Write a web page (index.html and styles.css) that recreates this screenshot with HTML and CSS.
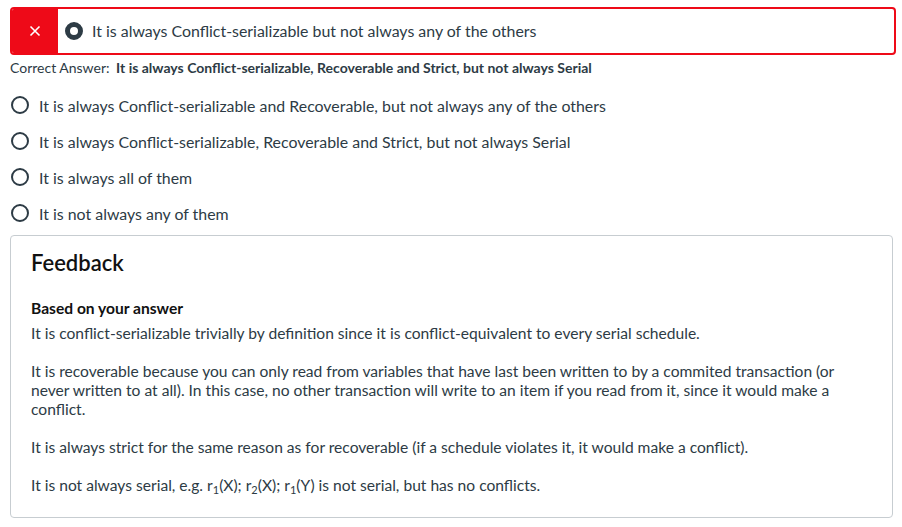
FILE: index.html
```html
<!DOCTYPE html>
<html>
<head>
<meta charset="utf-8">
<link rel="stylesheet" href="styles.css">
</head>
<body>
<div class="page">
  <div class="chosen">
    <div class="chosen-mark">
      <svg width="12" height="12" viewBox="0 0 12 12"><path d="M1.5 1.5 L10.5 10.5 M10.5 1.5 L1.5 10.5" stroke="#fff" stroke-width="1.6" fill="none"/></svg>
    </div>
    <div class="chosen-body">
      <span class="radio radio-on"></span>
      <span class="opt-text">It is always Conflict-serializable but not always any of the others</span>
    </div>
  </div>
  <div class="correct">Correct Answer: <b>It is always Conflict-serializable, Recoverable and Strict, but not always Serial</b></div>
  <ul class="options">
    <li class="option"><span class="radio"></span><span class="opt-text">It is always Conflict-serializable and Recoverable, but not always any of the others</span></li>
    <li class="option"><span class="radio"></span><span class="opt-text">It is always Conflict-serializable, Recoverable and Strict, but not always Serial</span></li>
    <li class="option"><span class="radio"></span><span class="opt-text">It is always all of them</span></li>
    <li class="option"><span class="radio"></span><span class="opt-text">It is not always any of them</span></li>
  </ul>
  <div class="feedback">
    <h2 class="fb-title">Feedback</h2>
    <h3 class="fb-sub">Based on your answer</h3>
    <p class="fb-p">It is conflict-serializable trivially by definition since it is conflict-equivalent to every serial schedule.</p>
    <p class="fb-p">It is recoverable because you can only read from variables that have last been written to by a commited transaction (or never written to at all). In this case, no other transaction will write to an item if you read from it, since it would make a conflict.</p>
    <p class="fb-p">It is always strict for the same reason as for recoverable (if a schedule violates it, it would make a conflict).</p>
    <p class="fb-p">It is not always serial, e.g. r<sub>1</sub>(X); r<sub>2</sub>(X); r<sub>1</sub>(Y) is not serial, but has no conflicts.</p>
  </div>
</div>
</body>
</html>
```
FILE: styles.css
```css
* { box-sizing: border-box; }
html, body { margin: 0; padding: 0; background: #fff; }
body {
  font-family: Lato, "Open Sans", sans-serif;
  color: #2d3b45;
}
.page {
  padding: 7px 6px 0 10px;
}
.chosen {
  display: flex;
  height: 48px;
  border: 2px solid #ee0a18;
  border-radius: 4px;
  overflow: hidden;
}
.chosen-mark {
  width: 46px;
  background: #ee0a18;
  display: flex;
  align-items: center;
  justify-content: center;
}
.chosen-body {
  display: flex;
  align-items: center;
  padding-left: 7px;
  gap: 9px;
}
.chosen-body .opt-text { padding-bottom: 2px; }
.radio {
  display: inline-block;
  width: 18px;
  height: 18px;
  border: 2px solid #2d3b45;
  border-radius: 50%;
  flex: none;
}
.radio-on {
  border-width: 5px;
}
.opt-text {
  font-size: 15.9px;
}
.correct {
  font-size: 14px;
  margin-top: 4px;
  line-height: 18px;
}
.correct b { margin-left: 3px; }
.options {
  list-style: none;
  margin: 10px 0 0;
  padding: 0;
}
.option {
  display: flex;
  align-items: center;
  gap: 10px;
  height: 36px;
  padding-left: 1px;
}
.feedback {
  margin-top: 4px;
  width: 883px;
  height: 283px;
  border: 1px solid #c7cdd1;
  border-radius: 4px;
  padding: 12px 20px 0 20px;
}
.fb-title {
  font-size: 22px;
  font-weight: 600;
  color: #111;
  margin: 0;
  line-height: 30px;
}
.fb-sub {
  font-size: 15.6px;
  font-weight: 700;
  color: #111;
  margin: 20px 0 0;
  line-height: 20px;
}
.fb-p {
  font-size: 15.6px;
  line-height: 19px;
  margin: 6px 0 19px;
}
.fb-p + .fb-p { margin-top: 0; }
.fb-p sub { font-size: 11px; line-height: 0; vertical-align: -3px; }
```
